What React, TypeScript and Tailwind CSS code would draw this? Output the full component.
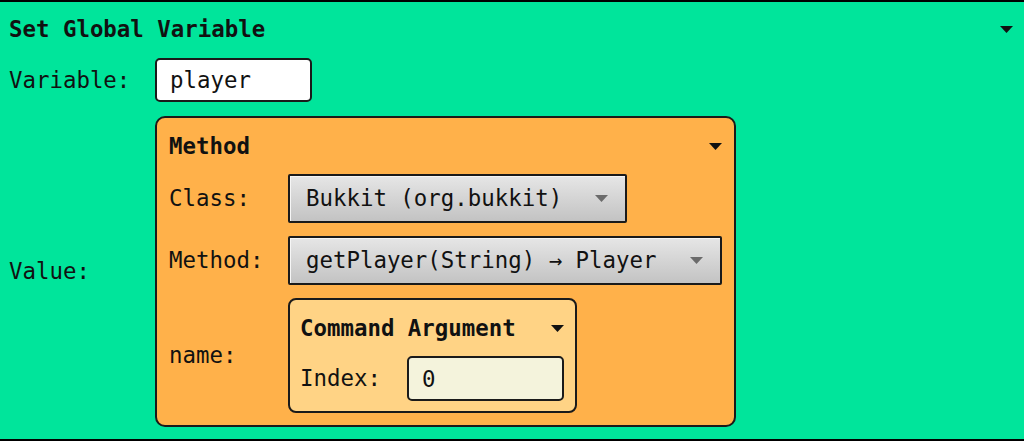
import React from "react";

function Caret({ className = "" }: { className?: string }) {
  return (
    <svg width="13" height="7" viewBox="0 0 13 7" className={className}>
      <path d="M0 0h13L6.5 7z" fill="currentColor" />
    </svg>
  );
}

function Select({ value }: { value: string }) {
  return (
    <div className="flex h-[49px] items-center gap-[33px] rounded-[2px] border-2 border-[#1a1a1a] bg-linear-to-b from-[#e6e6e6] to-[#c3c3c3] pl-[16px] pr-[17px] shadow-[inset_1px_1px_0_#f6f6f6]">
      <span className="whitespace-nowrap">{value}</span>
      <Caret className="text-[#6b6b6b]" />
    </div>
  );
}

function CommandArgument() {
  return (
    <div className="w-max rounded-[8px] border-2 border-[#1a1a1a] bg-[#ffd385] p-[10px] pr-[11px]">
      <div className="flex h-[36px] items-center justify-between">
        <span className="font-bold">Command Argument</span>
        <Caret />
      </div>
      <div className="mt-[10px] grid grid-cols-[107px_auto] items-center">
        <span>Index:</span>
        <input
          readOnly
          defaultValue="0"
          className="h-[45px] w-[157px] rounded-[5px] border-2 border-[#1a1a1a] bg-[#f4f3dc] px-[13px] outline-none"
        />
      </div>
    </div>
  );
}

function MethodBlock() {
  return (
    <div className="w-max rounded-[10px] border-2 border-[#1a1a1a] bg-[#ffb14a] p-[12px]">
      <div className="flex h-[32px] items-center justify-between">
        <span className="font-bold">Method</span>
        <Caret />
      </div>
      <div className="mt-[12px] grid grid-cols-[119px_auto] items-center justify-start justify-items-start gap-y-[13px]">
        <span>Class:</span>
        <Select value="Bukkit (org.bukkit)" />
        <span>Method:</span>
        <Select value="getPlayer(String) → Player" />
        <span>name:</span>
        <CommandArgument />
      </div>
    </div>
  );
}

export default function App() {
  return (
    <div className="h-[441px] w-[1024px] overflow-hidden font-['DejaVu_Sans_Mono','Liberation_Mono',monospace] text-[22.4px] leading-none text-[#111]">
      <div className="h-[441px] border-y-2 border-black bg-[#00e59b] pl-[9px] pr-[11px] pt-[12px]">
        <div className="flex h-[30px] items-center justify-between">
          <span className="font-bold">Set Global Variable</span>
          <Caret />
        </div>
        <div className="mt-[14px] grid grid-cols-[146px_auto] items-center justify-start justify-items-start gap-y-[14px]">
          <span>Variable:</span>
          <input
            readOnly
            defaultValue="player"
            className="h-[44px] w-[157px] rounded-[5px] border-2 border-[#1a1a1a] bg-white px-[13px] outline-none"
          />
          <span>Value:</span>
          <MethodBlock />
        </div>
      </div>
    </div>
  );
}
